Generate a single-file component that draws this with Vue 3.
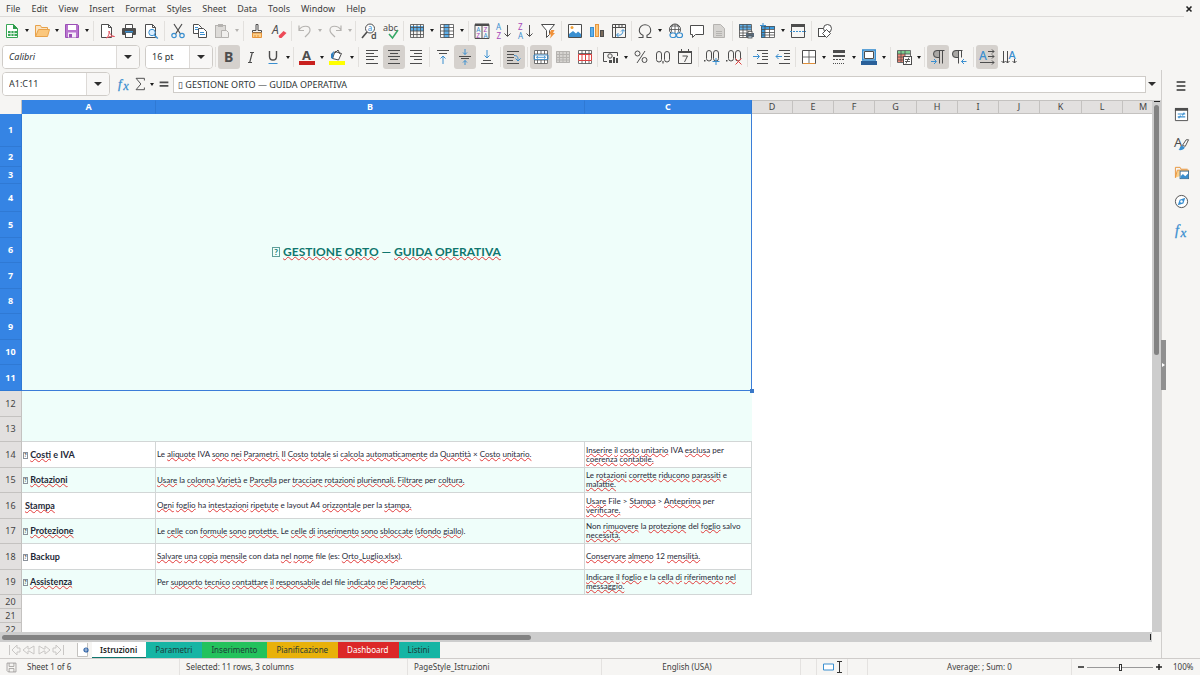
<script setup>
import { ref } from 'vue'

const menus = ['File', 'Edit', 'View', 'Insert', 'Format', 'Styles', 'Sheet', 'Data', 'Tools', 'Window', 'Help']

const D = '#4d4d4d'
const B = '#3a8fd0'
const G = '#b5b3b0'
const line = (d, c = D, w = 1) => `<path d="${d}" stroke="${c}" stroke-width="${w}" fill="none"/>`
const glyph = (t, x, y, s, c = D, extra = '') =>
  `<text x="${x}" y="${y}" font-size="${s}" fill="${c}" font-family="Noto Sans, sans-serif" ${extra}>${t}</text>`
const tableGrid = (c) => line('M1.5 2.5h13v11h-13zM1.5 5.5h13M1.5 8.5h13M1.5 11h13M4.5 2.5v11M8 2.5v11M11.5 2.5v11', c)

const icons = {
  new: `<path d="M2.5 1.5h7l4 4v9h-11z" fill="#fff" stroke="#3aa757"/><path d="M9 1l5 5H9z" fill="#2e9b4b"/><rect x="4" y="8" width="9" height="5" fill="#3aa757"/>` + line('M4 10.5h9M7 8v5M10 8v5', '#d8f0dd'),
  open: `<path d="M1.5 13.5v-11h5l1 2h6v2" fill="#fbe3c0" stroke="#e8a24a"/><path d="M1.5 13.5l3-7h11l-2 7z" fill="#fbc77c" stroke="#e8a24a"/>`,
  save: `<path d="M1.5 1.5h12l1 1v12h-13z" fill="#b974cf" stroke="#9a4fb5"/><rect x="4" y="2" width="8" height="5" fill="#fff"/><rect x="4" y="9.500" width="8" height="5" fill="#f5eef8"/><rect x="5" y="11" width="3" height="3.500" fill="#9a4fb5"/>`,
  pdf: `<path d="M2.500 1.500h7l3 3v10h-10z" fill="#fff" stroke="${D}"/>` + line('M9.500 1.500v3h3') + line('M7.500 15c2-2 3-4 2.500-7 1 4 3 5 5.500 5.500-3-.5-5.500 0-8 1.500z', '#e0505c'),
  print: `<path d="M4.500 5V1.500h7V5" fill="#fff" stroke="${D}"/><rect x="1" y="5" width="14" height="7" rx="1" fill="${D}"/><rect x="4.500" y="9.500" width="7" height="5" fill="#fff" stroke="${D}"/><rect x="4" y="8" width="8" height="1.500" fill="${B}"/>`,
  preview: `<path d="M2.500 14.500v-13h7l3 3v10z" fill="#fff" stroke="${D}"/>` + line('M9.500 1.500v3h3') + `<circle cx="9" cy="9.500" r="3.200" fill="#dcefff" stroke="${B}"/>` + line('M11.300 12l3.500 3.500', B, 1.4),
  cut: line('M4 1l6.500 10M12 1L5.500 11', D, 1.2) + `<circle cx="4" cy="12.500" r="2.200" fill="none" stroke="${B}" stroke-width="1.200"/><circle cx="12" cy="12.500" r="2.200" fill="none" stroke="${B}" stroke-width="1.200"/>`,
  copy: `<path d="M1.500 1.500h5l3 3v6h-8z" fill="#fff" stroke="${D}"/>` + line('M3 4.500h3M3 6.500h3', B) + `<path d="M6.500 5.500h5l3 3v6h-8z" fill="#fff" stroke="${D}"/>` + line('M8 9.500h4M8 11.500h5', B),
  paste: `<rect x="1.500" y="2.500" width="10" height="12" fill="#dddbd8" stroke="${G}"/><rect x="4" y="1" width="5" height="3" fill="${G}"/><path d="M7.500 7.500h5l2 2v5h-7z" fill="#f0efed" stroke="${G}"/>`,
  clone: line('M7 1.500h2v6h3.500v2h-9v-2H7z') + `<path d="M3.500 10h9v4.500h-9z" fill="#fbd08c" stroke="#e8943a"/>` + line('M6 12v3M9 12v3', '#e8943a'),
  clear: glyph('A', 1, 11, 12, D, 'font-style="italic"') + `<path d="M7.500 13l5-5 3 2-5 5h-2z" fill="#ed4a57"/>`,
  undo: line('M2 2.500v5h5M2 7c3-5 11-5 11 0 0 3-3 5-5 7', G, 1.2),
  redo: line('M14 2.500v5H9M14 7c-3-5-11-5-11 0 0 3 3 5 5 7', G, 1.2),
  find: `<circle cx="9" cy="5.500" r="4.500" fill="#fff" stroke="${D}"/>` + line('M6 9l-5 6', D, 1.6) + glyph('a', 6.7, 8, 8, B) + glyph('d', 10, 15.5, 9, D, 'font-weight="600"'),
  spell: glyph('abc', 0, 7.5, 9, D) + line('M6 11l3.500 4L15 7', '#35a866', 1.5),
  row: `<rect x="1" y="3" width="14" height="5" fill="#5fb0ea"/>` + line('M1.500 1.500h13v13h-13zM1.500 4.500h13M1.500 8h13M1.500 11.500h13M4.500 1.500v13M8 1.500v13M11.500 1.500v13', D, 0.8),
  col: `<rect x="1" y="1" width="14" height="14" fill="#fff"/><rect x="5" y="1" width="5" height="14" fill="#5fb0ea"/>` + line('M1.500 1.500h13v13h-13zM1.500 4.500h13M1.500 8h13M1.500 11.500h13M5 1.500v13M10 1.500v13', D, 0.8),
  sort: line('M1 1.500h14v14H1zM8 1v14') + `<rect x="1" y="0.500" width="14" height="2.500" fill="${D}"/>` + glyph('A', 2.2, 8.8, 6.5, B) + glyph('Z', 2.2, 14.8, 6.5, '#a648b8') + glyph('Z', 9.4, 8.8, 6.5, '#a648b8') + glyph('A', 9.4, 14.8, 6.5, B),
  asc: glyph('A', 0, 7, 8, B) + glyph('Z', 0.5, 15.5, 8, '#a648b8') + line('M11.500 2v11M8.500 10.500l3 3 3-3'),
  desc: glyph('Z', 0, 7, 8, '#a648b8') + glyph('A', 0, 15.5, 8, B) + line('M11.500 2v11M8.500 10.500l3 3 3-3'),
  filter: `<path d="M1.500 1.500h13l-5 6v4l-3 3v-7z" fill="#fff" stroke="${D}"/><path d="M11 7h3.500l-1.500 3h2l-5 5.500 1-4h-2z" fill="#f0913a"/>`,
  image: `<path d="M1.500 1.500h13v13h-13z" fill="#fff" stroke="${D}"/><path d="M2 14v-3l4-3 3 2.500 2-2 3 2.500v3z" fill="#3a8fd0"/><circle cx="5" cy="4.500" r="1.500" fill="#f0a13a"/>`,
  chart: `<rect x="1.500" y="4.500" width="3" height="9" fill="#5fb0ea" stroke="${B}"/><rect x="6.500" y="1.500" width="3" height="12" fill="#fbc77c" stroke="#e8943a"/><rect x="11.500" y="7.500" width="3" height="6" fill="#7a6a5a" stroke="${D}"/>`,
  pivot: line('M1.500 1.500h13v13h-13zM1.500 4.500h13M4.500 1.500v13M8 1.500v3M11 1.500v3') + line('M6 12c5 1 6-2 6-5M10 8.500l2-2 2 2M7.500 10l-2 2 2 2', B),
  omega: line('M1.500 14.500H6v-2.200C3.300 11 2.300 9.300 2.300 7.200 2.300 4 4.800 1.800 8 1.800s5.700 2.200 5.700 5.400c0 2.100-1 3.800-3.700 5.100v2.200h4.500', D, 1.1),
  link: `<circle cx="8" cy="6.500" r="5.500" fill="#fff" stroke="${D}"/>` + line('M2.500 6.500h11M8 1v11M4 3h8M5.500 2c-1.500 3-1.500 6 0 9M10.500 2c1.500 3 1.500 6 0 9', D, 0.8) + `<rect x="3" y="10" width="6" height="4.500" rx="2.200" fill="#f5f4f2" stroke="${B}" stroke-width="1.200"/><rect x="9.500" y="10" width="6" height="4.500" rx="2.200" fill="#f5f4f2" stroke="${B}" stroke-width="1.200"/>`,
  comment: `<path d="M1.500 2.500h13v9h-8l-3 3v-3h-2z" fill="#fff" stroke="${D}"/>`,
  page: `<path d="M2.500 1.500h7l4 4v9h-11z" fill="#d6d4d1" stroke="${G}"/>` + line('M5 8.500h6M5 10.500h6M5 12.500h6', G),
  area: `<rect x="1" y="1" width="12" height="14" fill="#fff"/><rect x="1" y="1" width="12" height="6" fill="#5fb0ea"/>` + line('M1.500 1.500h12v13h-12zM1.500 4h12M1.500 7h12M1.500 10h12M1.500 12.500h12M5 1.500v13M9 1.500v13', D, 0.8) + `<rect x="8" y="10" width="8" height="4" fill="#596a7a"/><rect x="10" y="8.500" width="4" height="2" fill="#fff" stroke="${D}" stroke-width=".8"/><rect x="10" y="13" width="4" height="2" fill="#bfe0f8" stroke="${D}" stroke-width=".8"/>`,
  freeze: `<rect x="1" y="3" width="14" height="12" fill="#fff"/><path d="M1 3h4v12H1zM5 3h10v3H5z" fill="#3a9be0"/>` + line('M1.500 3.500h13v11h-13zM1.500 6.500h13M1.500 9.500h13M1.500 12h13M5 3.500v11M9.500 3.500v11', D, 0.8) + line('M3 0v5M0 2.500h6', B),
  split: `<rect x="1" y="1" width="14" height="3" fill="${D}"/>` + line('M1.500 1.500h13v13h-13z') + line('M0 8.500h16', B).replace('fill="none"', 'fill="none" stroke-dasharray="2 1"'),
  shapes: `<rect x="1.500" y="5.500" width="8" height="8" fill="#fff" stroke="${D}"/><circle cx="10.500" cy="5.500" r="4" fill="#fff" stroke="${D}"/><path d="M9.500 6.500l4 4-4 4-4-4z" fill="#fff" stroke="${D}"/>`,
  bold: glyph('B', 3, 13, 14, D, 'font-weight="700"'),
  italic: line('M7 3.500h4M5 13.500h4M9.300 3.500l-2.600 10', D, 1.2),
  underline: line('M4.500 2v5.500c0 4.700 7 4.700 7 0V2', D, 1.4) + line('M3.500 14.500h9', B),
  color: glyph('A', 3, 10.5, 13, D, 'font-weight="700"') + `<rect x="0" y="12" width="16" height="4" fill="#c9211e"/>`,
  fill: `<path d="M6 2.500l-2.500 7 6 1.500 3-6.500z" fill="#fff" stroke="${D}"/>` + line('M6 4l3-3 2 4', D) + `<path d="M2 9V5l3-3-1 8z" fill="#2f7fc0"/><rect x="0" y="12" width="16" height="4" fill="#ffff00"/>`,
  left: line('M2 1.500h12M2 4.500h8M2 7.500h12M2 10.500h8M2 14.500h12'),
  center: line('M2 1.500h12M4 4.500h8M2 7.500h12M4 10.500h8M2 14.500h12'),
  right: line('M2 1.500h12M6 4.500h8M2 7.500h12M6 10.500h8M2 14.500h12'),
  top: line('M2 1.500h12M4 4.500h8') + line('M8 15V7M5.500 9.500L8 7l2.500 2.500', B),
  middle: line('M2 7.500h12M4 9.500h8') + line('M8 0v5.500M6 3.500l2 2 2-2M8 16v-4.500M6 13.500l2-2 2 2', B),
  bottom: line('M2 14.500h12M4 11.500h8') + line('M8 1v8M5.500 6.500L8 9l2.500-2.500', B),
  wrap: line('M1 2.500h12M1 5.500h7M1 8.500h7M1 11.500h6M1 14.500h12') + line('M8 6.500c4 0 4 2 4 5M9.500 9.500l2.500 2.500 2.500-2.500', B),
  merge: `<rect x="1" y="1" width="14" height="14" fill="#fff"/>` + line('M1.500 1.500h13v13h-13zM1.500 5h13M1.500 11h13M4.500 1.500V5M8 1.500V5M11.500 1.500V5M4.500 11v3.500M8 11v3.500M11.500 11v3.500', D, 0.8) + line('M1 6h14v4.500H1zM3.500 8.300h9M5 7L3.500 8.300 5 9.600M11 7l1.500 1.300L11 9.600', B, 0.9),
  unmerge1: `<rect x="1" y="2" width="14" height="12" fill="#d6d4d1"/>` + tableGrid(G),
  unmerge: `<rect x="1" y="1" width="14" height="14" fill="#fff"/>` + line('M1.500 1.500h13v13h-13zM1.500 4.500h13M5 1.500v13M8.500 1.500v13M12 1.500v13', D, 0.8) + `<rect x="1" y="5.500" width="14" height="6" fill="#fff"/>` + line('M1.500 5.500h13v6h-13zM5 5.500v6M8.500 5.500v6M12 5.500v6', '#dd4040'),
  currency: line('M4 12.500H.5v-9h14V7') + `<circle cx="7" cy="7" r="2.200" fill="none" stroke="${D}"/><path d="M6 11h3v3H6zM10 8h2v6h-2zM13 9h2v5h-2z" fill="${D}"/>`,
  percent: `<circle cx="4.500" cy="4.500" r="2.500" fill="none" stroke="${D}"/><circle cx="11.500" cy="11" r="2.500" fill="none" stroke="${D}"/>` + line('M12 2L4 14'),
  number: `<rect x="1.500" y="2.500" width="5" height="10.500" rx="2.500" fill="none" stroke="${D}"/><rect x="9.500" y="2.500" width="5" height="10.500" rx="2.500" fill="none" stroke="${D}"/><rect x="7.400" y="12" width="1.200" height="2.500" fill="${D}"/>`,
  date: line('M1.500 2.500h13v12h-13z') + `<rect x="1" y="2" width="14" height="2" fill="${D}"/>` + line('M4.500 0v3M11.500 0v3M5.500 7h5l-3 6', D),
  adddec: `<rect x="2.500" y="1.500" width="5" height="10.500" rx="2.500" fill="none" stroke="${D}"/><rect x="9.500" y="1.500" width="5" height="10.500" rx="2.500" fill="none" stroke="${D}"/><rect x="0" y="11" width="1.500" height="1.500" fill="${D}"/>` + line('M12 9v7M8.500 12.500h7', B),
  deldec: `<rect x="2.500" y="1.500" width="5" height="10.500" rx="2.500" fill="none" stroke="${D}"/><rect x="9.500" y="1.500" width="5" height="10.500" rx="2.500" fill="none" stroke="${D}"/><rect x="0" y="11" width="1.500" height="1.500" fill="${D}"/>` + line('M9.500 9.500l6 6M15.500 9.500l-6 6', '#e0403f'),
  indent: line('M4 1.500h11M9 4.500h6M9 7.500h6M9 10.500h6M4 14.500h11') + line('M0 7.500h6M4 5l2.500 2.500L4 10', B),
  outdent: line('M4 1.500h11M9 4.500h6M9 7.500h6M9 10.500h6M4 14.500h11') + line('M7 7.500H1M3.500 5L1 7.500 3.500 10', B),
  border: `<path d="M1.500 1.500h13v13h-13z" fill="#fff" stroke="${D}"/>` + line('M8 1.500v13M1.500 8h13', D, 0.8) + line('M2 14.500h12', '#e0903a'),
  linestyle: `<rect x="2" y="1" width="12" height="3" fill="${D}"/><rect x="2" y="6" width="12" height="2" fill="${D}"/>` + line('M2 10.500h12', D).replace('fill="none"', 'fill="none" stroke-dasharray="2 1"') + line('M2 14.500h12', D).replace('fill="none"', 'fill="none" stroke-dasharray="1 1"'),
  bordercolor: `<rect x="1.800" y="1" width="12.400" height="10" fill="#fff" stroke="${B}" stroke-width="1.600"/>` + line('M3.500 2.500h9v7h-9z') + `<rect x="0" y="12" width="16" height="4" fill="#2a6099"/>`,
  cond: `<rect x="1" y="2" width="13" height="3" fill="#7fcf93"/><rect x="1" y="5" width="8" height="8" fill="#f08a7a"/>` + line('M1.500 1.500h13v12h-13zM1.500 5h13M1.500 8h8M1.500 11h8M5 1.500v12M9 1.500v12', D, 0.8) + `<rect x="7.500" y="7.500" width="8" height="8" fill="#fff" stroke="${D}"/>` + line('M9 10.500h5M9 12.500h5M13 8.500l-3 6', D, 0.9),
  ltr: `<path d="M9.500 1H7a3.600 3.600 0 0 0 0 8h2.500z" fill="#a9a7a4"/>` + line('M14.500 1.500H7a3.500 3.500 0 0 0 0 7h2M9.500 1.500v13M12.500 1.500v13') + line('M1 12.500h5M4 10l2.500 2.500L4 15', B),
  rtl: `<path d="M6.500 1H4a3.600 3.600 0 0 0 0 8h2.500z" fill="#a9a7a4"/>` + line('M10.500 1.500H4a3.500 3.500 0 0 0 0 7h2M6.500 1.500v13M9.500 1.500v7') + line('M14.500 12.500h-5M12 10l-2.500 2.500L12 15', B),
  horiz: glyph('A', 0, 10.5, 12, B, 'font-weight="500"') + line('M9 2.500h6M13 .5l2 2-2 2M9 7.500h6M13 5.500l2 2-2 2M1 13.500h14M13 11.500l2 2-2 2'),
  vert: glyph('A', 7.5, 10, 11, B, 'font-weight="500"') + line('M2.500 2v12M.5 12l2 2 2-2M6.500 2v12M4.500 12l2 2 2-2M13.500 10v4M11.500 12l2 2 2-2'),
  fx: `<text x="1" y="12.500" font-size="15" font-style="italic" fill="${B}" stroke="${B}" stroke-width=".3" font-family="Liberation Serif, serif">f</text><text x="7" y="14.500" font-size="14" font-style="italic" fill="${B}" stroke="${B}" stroke-width=".3" font-family="Liberation Serif, serif">x</text>`,
  sum: line('M13 4V1.500H3.500L9 8l-5.500 6.500H13V12', D, 1.1),
  equals: line('M3 6h10M3 10h10', D, 2),
  burger: line('M3 3.500h10M3 8h10M3 12.500h10', '#333', 1.6),
  props: `<path d="M1.500 2.500h13v12h-13z" fill="#fff" stroke="${D}"/><rect x="1" y="1" width="14" height="3" fill="${D}"/>` + line('M4 7.500h8M4 10.500h8M11 6l-2 3M7 9l-2 3', B, 1.2),
  styles: glyph('A', 0, 12, 14, D) + `<path d="M9 10l4-6 2.500 0-3.500 7z" fill="#fff" stroke="${D}"/><path d="M4.500 15c2 0 1-4 4-4.500l3 1.500c-1 3-4 3.500-7 3z" fill="#3a8fd0"/>`,
  gallery: `<path d="M1.500 13.500v-11h5l1 2h7" fill="none" stroke="#e8943a"/><path d="M1.500 13.500l2-8h12v3" fill="#fbd08c" stroke="#e8943a"/><rect x="6.500" y="6.500" width="9" height="8" fill="#fff" stroke="#3d6f95"/><path d="M7 14v-2l2.500-2.500L12 12l3-3v5z" fill="#3a8fd0"/>`,
  navigator: `<circle cx="8" cy="8" r="6.500" fill="#fff" stroke="${D}"/><path d="M12 4l-2 6-6 2 2-6z" fill="#3a8fd0"/><circle cx="8" cy="8" r="1.300" fill="#fff"/>`,
  disk: `<path d="M1.500 1.500h13v13h-11l-2-2z" fill="none" stroke="#8a8886"/>` + line('M4.500 1.500v5h7v-5M4.500 14.500v-5h7v5', '#8a8886')
}

const b = (icon, label, opt = {}) => ({ icon, label, ...opt })
const S = { sep: true }
const T = { sep: true, tight: true }
const dd = { drop: true }
const on = { active: true }

const standard = [
  b('new', 'New', dd), b('open', 'Open', dd), b('save', 'Save', dd), S,
  b('pdf', 'Export as PDF'), b('print', 'Print'), b('preview', 'Print preview'), S,
  b('cut', 'Cut'), b('copy', 'Copy'), b('paste', 'Paste', { drop: true, dim: true }), S,
  b('clone', 'Clone formatting'), b('clear', 'Clear formatting'), T,
  b('undo', 'Undo', { drop: true, dim: true }), b('redo', 'Redo', { drop: true, dim: true }), T,
  b('find', 'Find and replace'), b('spell', 'Spelling'), T,
  b('row', 'Row', dd), b('col', 'Column', dd), S,
  b('sort', 'Sort'), b('asc', 'Sort ascending'), b('desc', 'Sort descending'), b('filter', 'AutoFilter'), S,
  b('image', 'Image'), b('chart', 'Chart'), b('pivot', 'Pivot table'), T,
  b('omega', 'Special character', dd), b('link', 'Hyperlink'), b('comment', 'Comment'), b('page', 'Headers and footers', { dim: true }), S,
  b('area', 'Print area'), b('freeze', 'Freeze rows and columns', dd), b('split', 'Split window'), S,
  b('shapes', 'Draw functions')
]
const formatting = [
  b('bold', 'Bold', on), b('italic', 'Italic'), b('underline', 'Underline', dd), T,
  b('color', 'Font color', dd), b('fill', 'Background color', dd), S,
  b('left', 'Align left'), b('center', 'Center', on), b('right', 'Align right'), S,
  b('top', 'Align top'), b('middle', 'Center vertically', on), b('bottom', 'Align bottom'), S,
  b('wrap', 'Wrap text', on), S,
  b('merge', 'Merge and center', on), b('unmerge1', 'Merge cells', { dim: true }), b('unmerge', 'Unmerge cells'), T,
  b('currency', 'Currency', dd), b('percent', 'Percent'), b('number', 'Number'), b('date', 'Date'), S,
  b('adddec', 'Add decimal place'), b('deldec', 'Delete decimal place'), S,
  b('indent', 'Increase indent'), b('outdent', 'Decrease indent'), T,
  b('border', 'Borders', dd), b('linestyle', 'Border style', dd), b('bordercolor', 'Border color', dd), S,
  b('cond', 'Conditional formatting', dd), T,
  b('ltr', 'Left to right', on), b('rtl', 'Right to left'), S,
  b('horiz', 'Text direction horizontal', on), b('vert', 'Text direction vertical')
]
const deck = [
  ['props', 'Properties'], ['styles', 'Styles'], ['gallery', 'Gallery'], ['navigator', 'Navigator'], ['fx', 'Functions']
]

const columns = [
  ['A', 134], ['B', 429], ['C', 167], ['D', 41], ['E', 41], ['F', 41], ['G', 42],
  ['H', 41], ['I', 41], ['J', 41], ['K', 42], ['L', 41], ['M', 41]
]
const topHeights = [33, 20, 17, 28, 26, 25, 26, 25, 26, 25, 26]

const guide = [
  { n: 14, h: 26, mark: true, a: 'Costi e IVA', b: 'Le aliquote IVA sono nei Parametri. Il Costo totale si calcola automaticamente da Quantità × Costo unitario.', c: 'Inserire il costo unitario IVA esclusa per coerenza contabile.' },
  { n: 15, h: 25, mark: true, a: 'Rotazioni', b: 'Usare la colonna Varietà e Parcella per tracciare rotazioni pluriennali. Filtrare per coltura.', c: 'Le rotazioni corrette riducono parassiti e malattie.' },
  { n: 16, h: 26, mark: false, a: 'Stampa', b: 'Ogni foglio ha intestazioni ripetute e layout A4 orizzontale per la stampa.', c: 'Usare File > Stampa > Anteprima per verificare.' },
  { n: 17, h: 25, mark: true, a: 'Protezione', b: 'Le celle con formule sono protette. Le celle di inserimento sono sbloccate (sfondo giallo).', c: 'Non rimuovere la protezione del foglio salvo necessità.' },
  { n: 18, h: 26, mark: true, a: 'Backup', b: 'Salvare una copia mensile con data nel nome file (es: Orto_Luglio.xlsx).', c: 'Conservare almeno 12 mensilità.' },
  { n: 19, h: 25, mark: true, a: 'Assistenza', b: 'Per supporto tecnico contattare il responsabile del file indicato nei Parametri.', c: 'Indicare il foglio e la cella di riferimento nel messaggio.' }
]
const known = new Set(['le', 'iva', 'e', 'la', 'per', 'ha', 'layout', 'a4', 'con', 'data', 'file', 'es', 'da', 'si', 'non', 'salvo', 'backup', '×', '>', '12', '—', 'del'])
const words = (text) => text.split(' ').map((w) => {
  const [, pre, core, post] = w.match(/^(\(?)(.*?)((?:[):]+\.?)?)$/)
  return { pre, core, post, bad: !known.has(core.toLowerCase()) }
})

const tabs = [
  ['Istruzioni', 'current'], ['Parametri', 'teal'], ['Inserimento', 'green'],
  ['Pianificazione', 'amber'], ['Dashboard', 'red'], ['Listini', 'teal']
]
const zoom = ref(50)
const formula = ref('▯ GESTIONE ORTO — GUIDA OPERATIVA')
const cellRef = ref('A1:C11')
const font = ref('Calibri')
const size = ref('16 pt')
</script>

<template>
  <div class="window">
    <nav class="menubar" aria-label="Menu">
      <button v-for="m in menus" :key="m" class="menu">{{ m }}</button>
      <button class="close" aria-label="Close document">
        <svg viewBox="0 0 8 8" width="8" height="8"><path d="M1.500 1.500l5 5M6.500 1.500l-5 5" stroke="#222" stroke-width="1.600" /></svg>
      </button>
    </nav>

    <div class="toolbar standard" role="toolbar" aria-label="Standard">
      <template v-for="(t, i) in standard" :key="i">
        <span v-if="t.sep" class="sep" :class="{ tight: t.tight }"></span>
        <template v-else>
          <button class="tool" :class="{ active: t.active }" :aria-label="t.label">
            <svg viewBox="0 0 16 16" width="16" height="16" v-html="icons[t.icon]"></svg>
          </button>
          <button v-if="t.drop" class="drop" :class="{ dim: t.dim }" :aria-label="t.label + ' options'"></button>
        </template>
      </template>
    </div>

    <div class="toolbar formatting" role="toolbar" aria-label="Formatting">
      <div class="combo font">
        <input v-model="font" aria-label="Font name" />
        <button class="arrow" aria-label="Show fonts"></button>
      </div>
      <div class="combo size">
        <input v-model="size" aria-label="Font size" />
        <button class="arrow" aria-label="Show sizes"></button>
      </div>
      <span class="sep"></span>
      <template v-for="(t, i) in formatting" :key="i">
        <span v-if="t.sep" class="sep" :class="{ tight: t.tight }"></span>
        <template v-else>
          <button class="tool" :class="{ active: t.active }" :aria-label="t.label">
            <svg viewBox="0 0 16 16" width="16" height="16" v-html="icons[t.icon]"></svg>
          </button>
          <button v-if="t.drop" class="drop" :aria-label="t.label + ' options'"></button>
        </template>
      </template>
    </div>

    <div class="work">
      <main class="main">
        <div class="formulabar">
          <div class="combo ref">
            <input v-model="cellRef" aria-label="Name box" />
            <button class="arrow" aria-label="Show names"></button>
          </div>
          <button class="mini" aria-label="Function wizard"><svg viewBox="0 0 16 16" width="14" height="14" v-html="icons.fx"></svg></button>
          <button class="mini" aria-label="Select function"><svg viewBox="0 0 16 16" width="14" height="14" v-html="icons.sum"></svg></button>
          <button class="drop" aria-label="Function options"></button>
          <button class="mini" aria-label="Formula"><svg viewBox="0 0 16 16" width="14" height="14" v-html="icons.equals"></svg></button>
          <input v-model="formula" class="formula" aria-label="Input line" />
          <button class="arrow expand" aria-label="Expand formula bar"></button>
        </div>

        <div class="gridrow">
          <div class="sheet">
            <table>
              <colgroup>
                <col class="rowcol" />
                <col v-for="c in columns" :key="c[0]" :style="{ width: c[1] + 'px' }" />
              </colgroup>
              <thead>
                <tr>
                  <td class="corner"></td>
                  <th v-for="(c, i) in columns" :key="c[0]" :class="{ picked: i < 3 }" scope="col">{{ c[0] }}</th>
                </tr>
              </thead>
              <tbody>
                <tr v-for="(h, i) in topHeights" :key="i" :style="{ height: h + 'px' }">
                  <th class="picked" scope="row">{{ i + 1 }}</th>
                  <td v-if="i === 0" class="title" colspan="3" rowspan="11">
                    <span class="tofu">?</span>{{ ' ' }}<template v-for="(w, k) in words('GESTIONE ORTO — GUIDA OPERATIVA')" :key="k"><span :class="{ bad: w.bad }">{{ w.core }}</span>{{ ' ' }}</template>
                    <i class="handle"></i>
                  </td>
                </tr>
                <tr v-for="r in [[12, 26], [13, 25]]" :key="r[0]" :style="{ height: r[1] + 'px' }">
                  <th scope="row">{{ r[0] }}</th>
                  <td class="tint" :class="{ last: r[0] === 13 }" colspan="3"></td>
                </tr>
                <tr v-for="r in guide" :key="r.n" :style="{ height: r.h + 'px' }" class="entry" :class="{ odd: r.n % 2 }">
                  <th scope="row">{{ r.n }}</th>
                  <td class="topic" :class="{ bare: !r.mark }">
                    <span v-if="r.mark" class="tofu">?</span>{{ ' ' }}<template v-for="(w, k) in words(r.a)" :key="k"><span :class="{ bad: w.bad }">{{ w.core }}</span>{{ ' ' }}</template>
                  </td>
                  <td v-for="key in ['b', 'c']" :key="key" class="text">
                    <template v-for="(w, k) in words(r[key])" :key="k">{{ w.pre }}<span :class="{ bad: w.bad }">{{ w.core }}</span>{{ w.post }}{{ ' ' }}</template>
                  </td>
                </tr>
                <tr v-for="n in [20, 21, 22]" :key="n" class="plain">
                  <th scope="row">{{ n }}</th>
                </tr>
              </tbody>
            </table>
          </div>
          <div class="vscroll"><i></i><b></b></div>
        </div>
        <div class="hscroll"><div class="track"><b></b><i></i></div></div>

        <div class="tabs">
          <div class="nav">
            <button aria-label="First sheet"><svg viewBox="0 0 14 12" width="14" height="12"><path d="M2.500 1v10M5 6l5-5v3h3v4h-3v3z" /></svg></button>
            <button aria-label="Previous sheet"><svg viewBox="0 0 14 12" width="14" height="12"><path d="M1 6l5-4v3h1l5-3v8L7 7H6v3z" /></svg></button>
            <button aria-label="Next sheet"><svg viewBox="0 0 14 12" width="14" height="12"><path d="M13 6L8 2v3H7L2 2v8l5-3h1v3z" /></svg></button>
            <button aria-label="Last sheet"><svg viewBox="0 0 14 12" width="14" height="12"><path d="M11.500 1v10M9 6L4 1v3H1v4h3v3z" /></svg></button>
          </div>
          <button class="add" aria-label="Add sheet">
            <svg viewBox="0 0 14 14" width="14" height="14"><path d="M.5 0v13.500h10V0" fill="#fff" stroke="#c4c2bf" /><circle cx="9" cy="7" r="2" fill="#fff" stroke="#2a5fa5" stroke-width="1.200" /><path d="M9 5.500v3M7.500 7h3" stroke="#2a5fa5" stroke-width=".6" /></svg>
          </button>
          <button v-for="t in tabs" :key="t[0]" class="tab" :class="t[1]">{{ t[0] }}</button>
        </div>
      </main>

      <aside class="sidebar">
        <button aria-label="Sidebar settings"><svg viewBox="0 0 16 16" width="14" height="14" v-html="icons.burger"></svg></button>
        <button v-for="d in deck" :key="d[0]" :aria-label="d[1]"><svg viewBox="0 0 16 16" width="15" height="15" v-html="icons[d[0]]"></svg></button>
        <button class="grip" aria-label="Hide sidebar"></button>
      </aside>
    </div>

    <footer class="status">
      <div class="first"><svg viewBox="0 0 16 16" width="11" height="11" v-html="icons.disk"></svg>Sheet 1 of 6</div>
      <div>Selected: 11 rows, 3 columns</div>
      <div>PageStyle_Istruzioni</div>
      <div class="mid english">English (USA)</div>
      <div></div>
      <div class="mode">
        <svg viewBox="0 0 20 12" width="20" height="12"><path d="M.5 3h10v6H.5z" fill="#fff" stroke="#3a8fd0" /><path d="M14 .5h5M14 11.500h5M16.500.5v11" stroke="#333" fill="none" /></svg>
      </div>
      <div></div>
      <div class="mid">Average: ; Sum: 0</div>
      <div class="zoom">
        <button aria-label="Zoom out"><svg viewBox="0 0 8 8" width="8" height="8"><path d="M1 4h6" stroke="#222" stroke-width="1.500" /></svg></button>
        <input v-model="zoom" type="range" aria-label="Zoom" />
        <button aria-label="Zoom in"><svg viewBox="0 0 8 8" width="8" height="8"><path d="M1 4h6M4 1v6" stroke="#222" stroke-width="1.500" /></svg></button>
        <span>100%</span>
      </div>
    </footer>
  </div>
</template>

<style>
body {
  margin: 0;
  background: #f6f5f3;
}
</style>

<style scoped>
.window {
  display: flex;
  flex-direction: column;
  height: 100vh;
  overflow: hidden;
  background: #f6f5f3;
  color: #3d3d3d;
  font-family: "Noto Sans", sans-serif;
  font-size: 9px;
  line-height: 12px;
}
button {
  display: flex;
  align-items: center;
  justify-content: center;
  flex: none;
  padding: 0;
  border: 0;
  background: none;
  color: inherit;
  font: inherit;
}
input {
  min-width: 0;
  padding: 0;
  border: 0;
  outline: 0;
  color: #2e3436;
  font: inherit;
}
svg {
  display: block;
  flex: none;
  overflow: visible;
}
.menubar {
  display: flex;
  flex: none;
  box-sizing: border-box;
  height: 17px;
  margin-right: 16px;
  padding: 2px 0 0 1px;
  border-bottom: 1px solid #dddbd9;
}
.menu {
  padding: 0 6px 0 5px;
}
.close {
  width: 12px;
  margin: 0 -11px 0 auto;
}
.toolbar {
  display: flex;
  flex: none;
  align-items: center;
}
.standard {
  height: 27px;
  padding-left: 1px;
}
.formatting {
  height: 26px;
  padding-left: 2px;
}
.tool {
  width: 22px;
  height: 24px;
  border-radius: 3px;
}
.tool.active {
  background: #d5d1cd;
}
.drop {
  width: 8px;
  height: 24px;
}
.drop::after {
  border: 2px solid transparent;
  border-top: 3px solid #1c1c1c;
  border-bottom: 0;
  content: "";
}
.drop.dim::after {
  border-top-color: #b5b3b0;
}
.sep {
  flex: none;
  width: 1px;
  height: 20px;
  margin: 0 2px;
  background: #e2e0dd;
}
.sep.tight {
  margin: 0 2px 0 1px;
}
.combo {
  display: flex;
  flex: none;
  box-sizing: border-box;
  height: 24px;
  overflow: hidden;
  border: 1px solid #cfccc8;
  border-radius: 4px;
  background: #fff;
}
.combo input {
  flex: 1;
  padding-left: 6px;
  background: #fff;
}
.combo .arrow {
  width: 23px;
  border-left: 1px solid #dddad7;
  background: #f8f7f6;
}
.arrow::after {
  border: 4px solid transparent;
  border-top: 4px solid #2e2e2e;
  border-bottom: 0;
  content: "";
}
.combo.font {
  width: 138px;
  margin-right: 5px;
}
.combo.font input {
  font-style: italic;
}
.combo.size {
  width: 68px;
}
.combo.ref {
  width: 108px;
  margin-right: 6px;
}
.work {
  display: flex;
  flex: 1;
  min-height: 0;
}
.main {
  display: flex;
  flex: 1;
  flex-direction: column;
  min-width: 0;
}
.formulabar {
  display: flex;
  flex: none;
  align-items: center;
  height: 28px;
  padding: 0 3px 2px 2px;
}
.mini {
  width: 16px;
  height: 20px;
}
.formula {
  flex: 1;
  height: 15px;
  margin-left: 1px;
  padding-left: 4px;
  border: 1px solid #cfccc8;
  background: #fff;
}
.expand {
  width: 12px;
}
.gridrow {
  display: flex;
  flex: 1;
  min-height: 0;
}
.sheet {
  flex: 1;
  min-width: 0;
  overflow: hidden;
  background: #fff;
}
table {
  width: 0;
  border-spacing: 0;
  table-layout: fixed;
}
.rowcol {
  width: 22px;
}
th,
td {
  box-sizing: border-box;
  padding: 0;
}
th {
  border-right: 1px solid #c4c2c0;
  border-bottom: 1px solid #c4c2c0;
  background: #e2e0df;
  color: #444;
  font-weight: 400;
}
thead th {
  height: 14px;
  border-top: 1px solid #c4c2c0;
  line-height: 12px;
}
.corner {
  border-right: 1px solid #c4c2c0;
  background: #f6f5f3;
}
th.picked {
  border-color: #2f79d4;
  background: #3584e4;
  color: #fff;
  font-weight: 700;
}
thead th.picked {
  border-top-color: #3584e4;
  border-bottom-color: #3584e4;
}
.title {
  position: relative;
  border-right: 1px solid #3b7dd8;
  border-bottom: 1px solid #3b7dd8;
  background: #effefa;
  color: #0f766e;
  font-family: Lato, sans-serif;
  font-size: 12px;
  font-weight: 700;
  text-align: center;
}
.handle {
  position: absolute;
  right: -3px;
  bottom: -3px;
  width: 4px;
  height: 4px;
  background: #3a78c8;
}
.tint {
  background: #effefa;
}
.tint.last {
  border-bottom: 1px solid #d2d6d6;
}
.entry td {
  border-right: 1px solid #d2d6d6;
  border-bottom: 1px solid #d2d6d6;
  color: #1f2937;
}
.entry.odd td {
  background: #effefa;
}
.entry .topic {
  padding-left: 1px;
  font-family: Lato, sans-serif;
  font-weight: 700;
}
.entry .bare {
  padding-left: 3px;
}
.text {
  padding: 0 8px 0 1px;
  font-family: Lato, sans-serif;
  font-size: 8px;
  line-height: 9px;
}
.tofu {
  display: inline-block;
  box-sizing: border-box;
  width: 8px;
  border: 1px solid #5f9f99;
  font-size: 8px;
  line-height: 8px;
  text-align: center;
  vertical-align: 1px;
}
.topic .tofu {
  width: 5px;
  border-color: #8b929b;
  font-size: 5px;
  line-height: 5px;
}
.bad {
  text-decoration: underline wavy #e23b3b 1px;
  text-decoration-skip-ink: none;
  text-underline-offset: 0;
}
.plain {
  height: 14px;
}
.vscroll {
  display: flex;
  flex: none;
  flex-direction: column;
  align-items: center;
  box-sizing: border-box;
  width: 9px;
  padding-top: 1px;
  background: #cdcdcd;
}
.vscroll i {
  width: 6px;
  height: 1px;
  margin-bottom: 3px;
  background: #222;
}
.vscroll b {
  width: 5px;
  height: 47%;
  border-radius: 3px;
  background: #828282;
}
.hscroll {
  flex: none;
  padding-right: 9px;
}
.track {
  display: flex;
  align-items: center;
  justify-content: space-between;
  height: 10px;
  padding: 0 1px 0 2px;
  background: #cdcdcd;
}
.track b {
  width: 46%;
  height: 5px;
  border-radius: 3px;
  background: #828282;
}
.track i {
  width: 1px;
  height: 6px;
  background: #222;
}
.tabs {
  display: flex;
  flex: none;
  height: 16px;
  font-size: 8px;
}
.nav {
  display: flex;
  padding: 0 10px 0 6px;
}
.nav button {
  width: 15px;
}
.nav path {
  fill: none;
  stroke: #c9c7c5;
}
.add {
  width: 16px;
}
.tab {
  padding: 0 10px 0 9px;
  color: #1d3b38;
}
.tab.current {
  padding: 0 9px 0 8px;
  border-bottom: 1px solid #0f766e;
  background: #fff;
  color: #222;
  font-weight: 600;
}
.teal {
  background: #16b5a4;
}
.green {
  background: #22c25c;
}
.amber {
  background: #e8b10a;
}
.tab.red {
  background: #dc2828;
  color: #fff;
}
.sidebar {
  position: relative;
  display: flex;
  flex: none;
  flex-direction: column;
  align-items: center;
  box-sizing: border-box;
  width: 39px;
  padding-top: 1px;
  border-left: 1px solid #d0cecc;
}
.sidebar button {
  width: 24px;
  height: 29px;
}
.sidebar .grip {
  position: absolute;
  top: 46%;
  left: -1px;
  width: 5px;
  height: 50px;
  background: #909090;
}
.grip::after {
  border: 2px solid transparent;
  border-left: 3px solid #fff;
  border-right: 0;
  content: "";
}
.status {
  display: grid;
  flex: none;
  grid-template-columns: 180fr 228fr 194fr 199fr 16fr 31fr 20fr 204fr 128px;
  height: 16px;
  border-top: 1px solid #cfccca;
  font-size: 8px;
}
.status > div {
  display: flex;
  align-items: center;
  padding-left: 6px;
  border-right: 1px solid #e4e2e0;
  white-space: nowrap;
}
.status .first {
  gap: 10px;
}
.status .mid {
  justify-content: center;
  padding: 0 0 0 20px;
}
.status .english {
  padding: 0 28px 0 0;
}
.status .zoom {
  padding-left: 4px;
  border: 0;
}
.zoom button {
  width: 10px;
}
.zoom span {
  margin-left: 9px;
}
.zoom input {
  width: 66px;
  height: 10px;
  margin: 0 1px;
  appearance: none;
  background: linear-gradient(#999, #999) center / 100% 1px no-repeat;
}
.zoom input::-webkit-slider-thumb {
  box-sizing: border-box;
  width: 3px;
  height: 7px;
  border: 1px solid #333;
  appearance: none;
  background: #fff;
}
</style>
